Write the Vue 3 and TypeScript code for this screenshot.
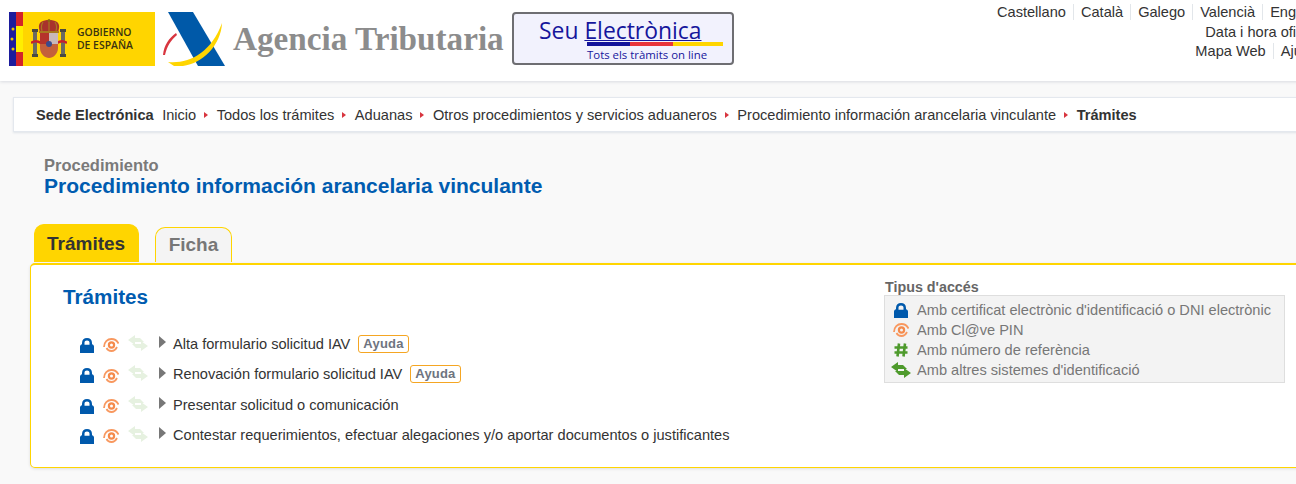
<script setup lang="ts">
const langs = ['Castellano', 'Català', 'Galego', 'Valencià', 'English']
const crumbs = [
  'Inicio',
  'Todos los trámites',
  'Aduanas',
  'Otros procedimientos y servicios aduaneros',
  'Procedimiento información arancelaria vinculante'
]
const tramites = [
  { label: 'Alta formulario solicitud IAV', help: true },
  { label: 'Renovación formulario solicitud IAV', help: true },
  { label: 'Presentar solicitud o comunicación', help: false },
  { label: 'Contestar requerimientos, efectuar alegaciones y/o aportar documentos o justificantes', help: false }
]
const accessTypes = [
  { icon: 'lock', label: "Amb certificat electrònic d'identificació o DNI electrònic" },
  { icon: 'pin', label: 'Amb Cl@ve PIN' },
  { icon: 'hash', label: 'Amb número de referència' },
  { icon: 'swap', label: "Amb altres sistemes d'identificació" }
]
const lockPath = 'M0 15V8.500C0 7.300 1 6.500 2 6.200V5C2 1.800 4 0 7 0s5 1.800 5 5v1.200c1 .3 2 1.100 2 2.300V15zM4.500 6.700h5V4.600C9.500 3.200 8.500 2.400 7 2.400s-2.500.8-2.500 2.200z'
const swapPath = 'M0 5L7 0v3h5l4 4H7v3zM20 11l-7 5v-3H8L4 9h9V6z'
</script>

<template>
  <div class="page">
    <header class="top">
      <div class="logos">
        <div class="gov">
          <svg class="flag" viewBox="0 0 14 54" width="14" height="54">
            <rect width="7" height="54" fill="#1c1c9c" />
            <rect x="7" width="7" height="54" fill="#d2232a" />
            <rect x="7" y="14" width="7" height="26" fill="#ffee00" />
            <circle cx="4" cy="17" r="1.500" fill="#e8c400" />
            <circle cx="3" cy="27" r="1.500" fill="#e8c400" />
            <circle cx="4" cy="37" r="1.500" fill="#e8c400" />
          </svg>
          <svg class="arms" viewBox="0 0 36 40" width="36" height="40">
            <rect x="2" y="12" width="4" height="24" fill="#6a6a62" />
            <rect x="30" y="12" width="4" height="24" fill="#6a6a62" />
            <rect x="1" y="10" width="6" height="3" fill="#4a4a40" />
            <rect x="29" y="10" width="6" height="3" fill="#4a4a40" />
            <rect x="1" y="35" width="6" height="3" fill="#4a4a40" />
            <rect x="29" y="35" width="6" height="3" fill="#4a4a40" />
            <path d="M0 24c4-3 7-2 10 0M36 24c-4-3-7-2-10 0" stroke="#c8202c" stroke-width="2.500" fill="none" />
            <path d="M8 9C7 3 12 1 18 1s11 2 10 8l-1 5H9z" fill="#a8322c" />
            <path d="M18 1v11M12 3c-2 3-2 6-1 9M24 3c2 3 2 6 1 9" stroke="#a87820" stroke-width="1.200" fill="none" />
            <circle cx="18" cy="1.500" r="1.500" fill="#8a6a10" />
            <rect x="8" y="12" width="20" height="2" fill="#a87820" />
            <path d="M9 14h18v15c0 6-5 10-9 10s-9-4-9-10z" fill="#c4603a" />
            <rect x="18" y="14" width="9" height="11" fill="#c9b8b8" />
            <rect x="9" y="14" width="9" height="11" fill="#b5332b" />
            <circle cx="18" cy="25" r="3" fill="#3a4a8c" />
          </svg>
          <div class="gov-name">GOBIERNO<br />DE ESPAÑA</div>
        </div>
        <svg class="at-mark" viewBox="0 0 62 54" width="62" height="54">
          <path d="M5 0h25l32 54H35z" fill="#0059a8" />
          <path d="M0 43C1 33 6 26 13 21l1 2C8 28 4 34 2 43z" fill="#d8353f" />
          <path d="M5 50c21 2 43-9 54-39-1 25-25 46-48 43z" fill="#ffd500" />
        </svg>
        <span class="at-name">Agencia Tributaria</span>
        <div class="seu">
          <div class="seu-title">Seu <u>Electrònica</u></div>
          <div class="seu-bar"><i class="b1"></i><i class="b2"></i><i class="b3"></i></div>
          <div class="seu-sub">Tots els tràmits on line</div>
        </div>
      </div>
      <nav class="tools">
        <ul class="tool-row">
          <li v-for="lang in langs" :key="lang">{{ lang }}</li>
        </ul>
        <div class="tool-row plain">Data i hora oficial</div>
        <ul class="tool-row">
          <li>Mapa Web</li>
          <li>Ajuda</li>
        </ul>
      </nav>
    </header>

    <div class="crumbs">
      <strong class="site">Sede Electrónica</strong>
      <template v-for="crumb in crumbs" :key="crumb">
        <span>{{ crumb }}</span>
        <i class="sep"></i>
      </template>
      <strong>Trámites</strong>
    </div>

    <div class="heading">
      <div class="kicker">Procedimiento</div>
      <h1>Procedimiento información arancelaria vinculante</h1>
    </div>

    <div class="tabs">
      <div class="tab active">Trámites</div>
      <div class="tab">Ficha</div>
    </div>

    <section class="panel">
      <div class="main-col">
        <h2>Trámites</h2>
        <ul class="list">
          <li v-for="item in tramites" :key="item.label">
            <svg class="ic-lock" viewBox="0 0 14 15" width="14" height="15">
              <path :d="lockPath" fill="#0059ac" fill-rule="evenodd" />
            </svg>
            <svg class="ic-pin" viewBox="0 0 16 14" width="16" height="14">
              <circle cx="8.500" cy="7" r="2.600" fill="none" stroke="#f58a4b" stroke-width="2.200" />
              <path d="M1 9C1 4 4.500 1 8.500 1c3 0 5.500 1.500 7 4.500M14 9c-1.500 3-3.500 4-5.500 4-2.500 0-4-1-5-3" fill="none" stroke="#f8985f" stroke-width="1.800" />
            </svg>
            <svg class="ic-swap" viewBox="0 0 20 16" width="20" height="16">
              <path :d="swapPath" fill="#e6f1e0" />
            </svg>
            <i class="arrow"></i>
            <span class="label">{{ item.label }}</span>
            <span v-if="item.help" class="badge">Ayuda</span>
          </li>
        </ul>
      </div>
      <aside class="access">
        <div class="access-title">Tipus d'accés</div>
        <ul class="access-box">
          <li v-for="a in accessTypes" :key="a.icon">
            <span class="access-icon">
              <svg v-if="a.icon === 'lock'" viewBox="0 0 14 15" width="14" height="15">
                <path :d="lockPath" fill="#0059ac" fill-rule="evenodd" />
              </svg>
              <svg v-else-if="a.icon === 'pin'" viewBox="0 0 16 14" width="16" height="14">
                <circle cx="8.500" cy="7" r="2.600" fill="none" stroke="#f58a4b" stroke-width="2.200" />
                <path d="M1 9C1 4 4.500 1 8.500 1c3 0 5.500 1.500 7 4.500M14 9c-1.500 3-3.500 4-5.500 4-2.500 0-4-1-5-3" fill="none" stroke="#f8985f" stroke-width="1.800" />
              </svg>
              <svg v-else-if="a.icon === 'hash'" viewBox="0 0 14 14" width="14" height="14">
                <path d="M5 .5 3.500 13.500M11 .5 9.500 13.500M.5 4.500h13M.5 9.500h13" stroke="#4e9a2c" stroke-width="2.600" fill="none" />
              </svg>
              <svg v-else viewBox="0 0 20 16" width="20" height="16">
                <path :d="swapPath" fill="#4e9a2c" />
              </svg>
            </span>
            {{ a.label }}
          </li>
        </ul>
      </aside>
    </section>
  </div>
</template>

<style>
html,
body {
  overflow: hidden;
  background: #f9f9f9;
}
</style>

<style scoped>
.page {
  width: 1500px;
  height: 484px;
  overflow: hidden;
  background: #f9f9f9;
  font-family: "Liberation Sans", Arial, sans-serif;
  font-size: 14.6px;
  color: #333;
}
ul {
  list-style: none;
  margin: 0;
  padding: 0;
}

/* cabecera */
.top {
  display: flex;
  justify-content: space-between;
  width: 1500px;
  height: 81px;
  box-sizing: border-box;
  padding: 12px 175px 0 9px;
  background: #fff;
  box-shadow: 0 1px 3px #d8dbe0;
}
.logos {
  display: flex;
  align-items: flex-start;
  height: 54px;
}
.gov {
  display: flex;
  align-items: center;
  width: 146px;
  height: 54px;
  background: #ffd500;
}
.flag {
  flex: none;
}
.arms {
  margin-left: 8px;
  flex: none;
}
.gov-name {
  margin-left: 10px;
  font-family: "Open Sans", sans-serif;
  font-size: 10.400px;
  line-height: 13px;
  font-weight: 600;
  color: #3a3410;
}
.at-mark {
  margin-left: 8px;
  flex: none;
}
.at-name {
  margin: 5px 0 0 8px;
  width: 279px;
  font-family: "Liberation Serif", serif;
  font-size: 33.200px;
  line-height: 44px;
  font-weight: 700;
  color: #8c8c8c;
  white-space: nowrap;
}
.seu {
  width: 222px;
  height: 53px;
  box-sizing: border-box;
  padding-left: 25px;
  border: 2px solid #6e6e72;
  border-radius: 4px;
  background: #f2f2fd;
  color: #16169c;
}
.seu-title {
  font-family: "Open Sans", sans-serif;
  font-size: 22.900px;
  line-height: 23px;
  margin-top: 5px;
  white-space: nowrap;
}
.seu-title u {
  text-decoration-thickness: 1px;
}
.seu-bar {
  display: flex;
  height: 4px;
  margin-left: 48px;
  width: 136px;
}
.seu-bar i {
  display: block;
}
.b1 {
  width: 43px;
  background: #14149a;
}
.b2 {
  width: 43px;
  background: #e8343a;
}
.b3 {
  width: 50px;
  background: #ffd500;
}
.seu-sub {
  margin: 1px 0 0 48px;
  font-family: "Open Sans", sans-serif;
  font-size: 11.400px;
  line-height: 15px;
  white-space: nowrap;
}
.tools {
  margin-top: -10px;
  line-height: 19.500px;
}
.tool-row {
  display: flex;
  justify-content: flex-end;
}
.tool-row li {
  padding: 0 7px;
  line-height: 16px;
  margin: 2px 0 1.500px;
  border-right: 1px solid #e2e6ea;
}
.tool-row li:last-child {
  border-right: 0;
}
.plain {
  padding: 1px 7px 0 0;
  line-height: 18.500px;
}

/* migas */
.crumbs {
  display: flex;
  align-items: center;
  width: 1480px;
  height: 35px;
  box-sizing: border-box;
  margin: 16px 0 0 13px;
  padding-left: 22px;
  background: #fff;
  border: 1px solid #e4e8ee;
  box-shadow: 0 1px 2px #dfe3e8;
  white-space: nowrap;
}
.site {
  margin-right: 8.500px;
}
.sep {
  width: 0;
  height: 0;
  margin: 1px 8.500px 0 8px;
  border-left: 4px solid #d8353f;
  border-top: 3px solid transparent;
  border-bottom: 3px solid transparent;
}

/* titulo */
.heading {
  margin: 24px 0 0 44px;
}
.kicker {
  font-size: 16.500px;
  line-height: 18px;
  font-weight: 700;
  color: #7a7a7a;
}
h1 {
  margin: 0;
  font-size: 21px;
  line-height: 24px;
  font-weight: 700;
  color: #005cb0;
}

/* pestanas */
.tabs {
  display: flex;
  align-items: flex-end;
  gap: 16.500px;
  height: 38px;
  margin: 26px 0 0 34px;
}
.tab {
  height: 35px;
  box-sizing: border-box;
  padding: 0 12.500px;
  border: 1px solid #ffd500;
  border-bottom: 0;
  border-radius: 10px 10px 0 0;
  background: #f4f4f4;
  font-size: 19px;
  line-height: 33px;
  font-weight: 700;
  color: #777;
}
.tab.active {
  height: 38px;
  padding: 0 12.500px 0 12px;
  background: #ffd500;
  line-height: 38px;
  color: #333;
}

/* panel */
.panel {
  display: flex;
  width: 1460px;
  height: 205px;
  box-sizing: border-box;
  margin: 1px 0 0 30px;
  padding-left: 32px;
  background: #fff;
  border: 1px solid #ffd500;
  border-top-width: 2px;
  border-radius: 5px;
  box-shadow: 0 1px 3px #ddd;
}
.main-col {
  width: 821px;
  flex: none;
}
h2 {
  margin: 20px 0 0;
  font-size: 20.700px;
  line-height: 24px;
  font-weight: 700;
  color: #005cb0;
}
.list {
  margin: 19.600px 0 0 17px;
}
.list li {
  display: flex;
  align-items: center;
  height: 30.400px;
}
.ic-lock {
  flex: none;
  margin-top: 3px;
}
.ic-pin {
  flex: none;
  margin: 3px 0 0 9px;
}
.ic-swap {
  flex: none;
  margin: -2px 0 0 9px;
}
.arrow {
  flex: none;
  width: 0;
  height: 0;
  margin: -3px 7px 0 11px;
  border-left: 7px solid #777;
  border-top: 6px solid transparent;
  border-bottom: 6px solid transparent;
}
.label {
  color: #333;
  white-space: nowrap;
}
.badge {
  margin-left: 8px;
  padding: 0 4px;
  height: 18px;
  box-sizing: border-box;
  line-height: 16px;
  border: 1px solid #f5a623;
  border-radius: 3px;
  font-size: 13px;
  font-weight: 700;
  letter-spacing: 0.200px;
  color: #6e7480;
}
.access {
  width: 401px;
  flex: none;
  margin-top: 15px;
}
.access-title {
  margin-left: 1px;
  font-size: 14.300px;
  line-height: 15px;
  font-weight: 700;
  color: #666;
}
.access-box {
  box-sizing: border-box;
  height: 88px;
  padding: 4px 0 0 6px;
  background: #f3f3f3;
  border: 1px solid #dedede;
  color: #777;
}
.access-box li {
  display: flex;
  align-items: center;
  height: 20px;
  white-space: nowrap;
}
.access-icon {
  display: flex;
  justify-content: center;
  width: 20px;
  margin-right: 6px;
}
</style>
